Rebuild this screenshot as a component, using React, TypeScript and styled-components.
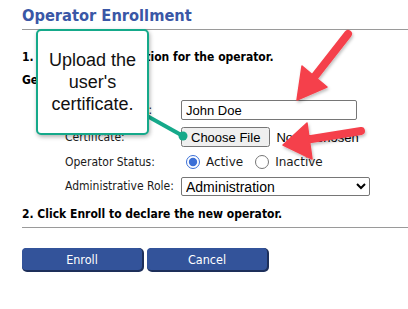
import React from 'react';
import styled, { createGlobalStyle } from 'styled-components';

const GlobalStyle = createGlobalStyle`
    body {
        margin: 0;
        background: #ffffff;
        font-family: 'DejaVu Sans Condensed', 'DejaVu Sans', sans-serif;
    }
`;

export default function App() {
    return (
        <>
            <GlobalStyle />
            <Page>
                <Title>Operator Enrollment</Title>
                <StepHeading>1. Enter the information for the operator.</StepHeading>
                <GroupHeading>General Information</GroupHeading>
                <FormGrid>
                    <Label>Operator Name:</Label>
                    <TextInput defaultValue="John Doe" />
                    <Label>Certificate:</Label>
                    <FileInput type="file" />
                    <Label>Operator Status:</Label>
                    <RadioGroup>
                        <RadioOption>
                            <Radio type="radio" name="status" defaultChecked />
                            Active
                        </RadioOption>
                        <RadioOption>
                            <Radio type="radio" name="status" />
                            Inactive
                        </RadioOption>
                    </RadioGroup>
                    <Label>Administrative Role:</Label>
                    <Select defaultValue="admin">
                        <option value="admin">Administration</option>
                        <option value="ops">Operations</option>
                    </Select>
                </FormGrid>
                <StepHeading ruled>2. Click Enroll to declare the new operator.</StepHeading>
                <ButtonRow>
                    <ActionButton>Enroll</ActionButton>
                    <ActionButton>Cancel</ActionButton>
                </ButtonRow>

                <Annotations width="408" height="309" viewBox="0 0 408 309">
                    <defs>
                        <filter id="soft" x="-20%" y="-20%" width="140%" height="140%">
                            <feDropShadow dx="1" dy="2" stdDeviation="1.5" floodColor="#000" floodOpacity="0.25" />
                        </filter>
                    </defs>
                    <g stroke="#15a98a" fill="#15a98a">
                        <line x1="140" y1="112" x2="183" y2="136" strokeWidth="4" />
                        <circle cx="183" cy="136" r="4.5" stroke="none" />
                    </g>
                    <g filter="url(#soft)" fill="#f5414b" stroke="#f5414b">
                        <line x1="348" y1="34" x2="312" y2="80" strokeWidth="8" strokeLinecap="round" />
                        <polygon points="297,100 302,66 327,87" strokeWidth="1.5" strokeLinejoin="round" />
                        <line x1="361" y1="131" x2="305" y2="140" strokeWidth="8" strokeLinecap="round" />
                        <polygon points="283,145 307,123 312,159" strokeWidth="1.5" strokeLinejoin="round" />
                    </g>
                </Annotations>

                <Callout>Upload the user's certificate.</Callout>
            </Page>
        </>
    );
}

const Page = styled.div`
    position: relative;
    width: 408px;
    height: 309px;
    overflow: hidden;
    padding-left: 22px;
    box-sizing: border-box;
`;

const Title = styled.h1`
    margin: 0;
    padding-top: 6px;
    height: 23px;
    border-bottom: 1px solid #9a9a9a;
    font-family: 'DejaVu Sans Condensed', 'DejaVu Sans', sans-serif;
    font-weight: 700;
    font-size: 16.3px;
    line-height: 20px;
    color: #3a57a6;
`;

const StepHeading = styled.div<{ ruled?: boolean }>`
    margin-top: ${({ ruled }) => (ruled ? '12px' : '20px')};
    padding-bottom: ${({ ruled }) => (ruled ? '6px' : '0')};
    border-bottom: ${({ ruled }) => (ruled ? '1px solid #9a9a9a' : 'none')};
    font-weight: 700;
    font-size: 12px;
    line-height: 14px;
    color: #000000;
`;

const GroupHeading = styled.div`
    margin-top: 9px;
    font-weight: 700;
    font-size: 12px;
    line-height: 14px;
    color: #000000;
`;

const FormGrid = styled.div`
    display: grid;
    grid-template-columns: 116px auto;
    grid-template-rows: 20px 20px 16px 18px;
    align-items: center;
    justify-items: start;
    row-gap: 7px;
    margin: 13px 0 0 43px;
`;

const Label = styled.span`
    font-size: 12px;
    color: #1a1a1a;
`;

const TextInput = styled.input`
    width: 176px;
    height: 20px;
    box-sizing: border-box;
    border: 1px solid #767676;
    border-radius: 2px;
    padding: 0 4px;
    font-family: 'Liberation Sans', Arial, sans-serif;
    font-size: 13px;
    color: #000;
`;

const FileInput = styled.input`
    font-family: 'Liberation Sans', Arial, sans-serif;
    font-size: 13px;
    color: #000;

    &::file-selector-button {
        height: 20px;
        padding: 0 8px;
        margin-right: 6px;
        font-family: 'Liberation Sans', Arial, sans-serif;
        font-size: 13px;
    }
`;

const RadioGroup = styled.div`
    display: flex;
    gap: 12px;
    padding-left: 5px;
`;

const RadioOption = styled.label`
    display: flex;
    align-items: center;
    gap: 6px;
    font-family: 'DejaVu Sans', sans-serif;
    font-size: 12px;
    color: #1a1a1a;
`;

const Radio = styled.input`
    margin: 0;
    width: 14px;
    height: 14px;
    accent-color: #3b6fd6;
`;

const Select = styled.select`
    width: 189px;
    height: 19px;
    box-sizing: border-box;
    border: 1px solid #767676;
    border-radius: 2px;
    font-family: 'Liberation Sans', Arial, sans-serif;
    font-size: 14px;
    color: #000;
    background: #fff;
`;

const ButtonRow = styled.div`
    display: flex;
    gap: 5px;
    margin-top: 20px;
`;

const ActionButton = styled.button`
    width: 120px;
    height: 22px;
    border: none;
    border-radius: 4px;
    background: #33539a;
    box-shadow: 1px 1px 0 1px #1d2f5a;
    color: #ffffff;
    font-family: 'DejaVu Sans Condensed', 'DejaVu Sans', sans-serif;
    font-size: 12.5px;
`;

const Annotations = styled.svg`
    position: absolute;
    left: 0;
    top: 0;
    pointer-events: none;
`;

const Callout = styled.div`
    position: absolute;
    left: 36px;
    top: 29px;
    width: 113px;
    height: 106px;
    box-sizing: border-box;
    display: flex;
    align-items: center;
    justify-content: center;
    padding: 0 6px;
    border: 2px solid #15a98a;
    border-radius: 5px;
    background: #ffffff;
    box-shadow: 1px 2px 4px rgba(0, 0, 0, 0.3);
    font-family: 'Liberation Sans', Arial, sans-serif;
    font-size: 18px;
    line-height: 22px;
    text-align: center;
    color: #111111;
`;
